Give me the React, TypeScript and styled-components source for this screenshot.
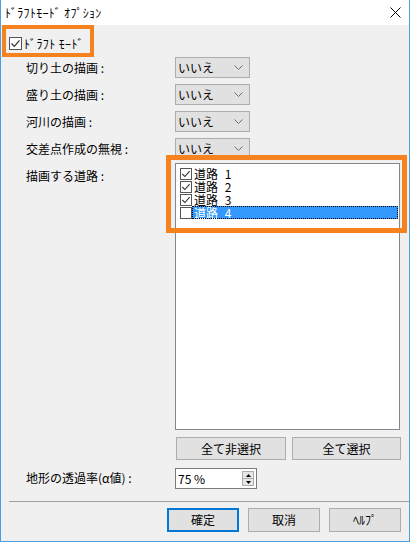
import React from "react";
import styled, { createGlobalStyle } from "styled-components";

const Global = createGlobalStyle`
  html, body { margin: 0; padding: 0; background: #ffffff; }
  body { font-family: "Noto Sans CJK JP", "Noto Sans", sans-serif; font-size: 12px; color: #000; }
  * { box-sizing: border-box; }
`;

const ORANGE = "#f5821f";

const Window = styled.div`
  width: 410px;
  height: 542px;
  border: 1px solid #4a9fe0;
  border-top: none;
  display: flex;
  flex-direction: column;
  background: #f0f0f0;
  overflow: hidden;
`;

const TitleBar = styled.div`
  height: 25px;
  background: #ffffff;
  display: flex;
  align-items: center;
  justify-content: space-between;
  padding: 0 8px 0 4px;
  flex: none;
`;

const Title = styled.span`
  font-size: 12px;
  line-height: 14px;
  letter-spacing: 0.3px;
`;

const Body = styled.div`
  flex: 1;
  display: flex;
  flex-direction: column;
  background: #f0f0f0;
`;

const DraftBox = styled.div`
  margin-left: 1px;
  width: 92px;
  height: 32px;
  border: 4px solid ${ORANGE};
  display: flex;
  align-items: center;
  padding: 5px 0 0 3px;
  gap: 2px;
`;

const BoxLabel = styled.span`
  font-size: 12px;
  line-height: 13px;
  letter-spacing: 0.4px;
`;

const CheckBox = styled.span<{ $size: number }>`
  width: ${(p) => p.$size}px;
  height: ${(p) => p.$size}px;
  flex: none;
  background: #ffffff;
  border: 1px solid #555555;
  display: inline-flex;
  align-items: center;
  justify-content: center;
`;

const Form = styled.div`
  display: grid;
  grid-template-columns: 149px 225px;
  row-gap: 6px;
  padding-left: 25px;
  align-items: center;
`;

const Label = styled.div<{ $top?: boolean }>`
  font-size: 12px;
  line-height: 14px;
  align-self: ${(p) => (p.$top ? "start" : "center")};
  padding-top: ${(p) => (p.$top ? "4px" : "0")};
`;

const Select = styled.div`
  width: 75px;
  height: 21px;
  background: #e1e1e1;
  border: 1px solid #adadad;
  display: flex;
  align-items: center;
  justify-content: space-between;
  padding: 0 6px 0 2px;
  font-size: 12px;
  line-height: 14px;
`;

const ListWrap = styled.div`
  position: relative;
  margin-top: -2px;
`;

const List = styled.div`
  height: 267px;
  background: #ffffff;
  border: 1px solid #828790;
  padding: 3px 0 0 4px;
  display: flex;
  flex-direction: column;
`;

const Item = styled.div`
  height: 13px;
  display: flex;
  align-items: center;
`;

const ItemText = styled.span<{ $selected?: boolean }>`
  flex: 1;
  height: 13px;
  margin-right: 1px;
  padding-left: 2px;
  font-size: 12px;
  line-height: 13px;
  word-spacing: 4px;
  color: ${(p) => (p.$selected ? "#ffffff" : "#000000")};
  background: ${(p) => (p.$selected ? "#3399ff" : "transparent")};
  outline: ${(p) => (p.$selected ? "1px dotted #000" : "none")};
  outline-offset: -1px;
`;

const Highlight = styled.div`
  position: absolute;
  left: -9px;
  top: -8px;
  width: 241px;
  height: 78px;
  border: 5px solid ${ORANGE};
  pointer-events: none;
`;

const ButtonRow = styled.div`
  display: grid;
  grid-template-columns: 110px 109px;
  column-gap: 6px;
  padding-left: 1px;
  margin-top: 1px;
`;

const Button = styled.button<{ $default?: boolean }>`
  height: 23px;
  background: #e1e1e1;
  border: ${(p) => (p.$default ? "2px solid #0078d7" : "1px solid #adadad")};
  font-family: "Noto Sans CJK JP", "Noto Sans", sans-serif;
  font-size: 12px;
  line-height: 14px;
  color: #000;
  padding: 0;
  display: flex;
  align-items: center;
  justify-content: center;
`;

const FooterButton = styled(Button)`
  width: 72px;
  height: 24px;
`;

const Spin = styled.div`
  width: 82px;
  height: 21px;
  background: #ffffff;
  border: 1px solid #7a7a7a;
  display: flex;
  align-items: center;
  justify-content: space-between;
  padding: 0 2px 0 2px;
  font-size: 12px;
  line-height: 14px;
  margin-top: 2px;
`;

const SpinButtons = styled.div`
  width: 12px;
  height: 15px;
  display: flex;
  flex-direction: column;
  border: 1px solid #adadad;
  background: #e6e6e6;
`;

const SpinPart = styled.div<{ $top?: boolean }>`
  flex: 1;
  display: flex;
  align-items: center;
  justify-content: center;
  border-bottom: ${(p) => (p.$top ? "1px solid #adadad" : "none")};
`;

const Separator = styled.div`
  height: 1px;
  background: #a0a0a0;
  margin: 12px 0 0 8px;
`;

const Footer = styled.div`
  display: flex;
  justify-content: flex-end;
  gap: 9px;
  padding: 6px 8px 0 0;
`;

const Check = ({ checked, size = 13 }: { checked: boolean; size?: number }) => (
  <CheckBox $size={size}>
    {checked && (
      <svg width={size - 2} height={size - 2} viewBox="0 0 11 11">
        <path d="M1.5 5.5 L4.3 8.3 L9.5 2.3" fill="none" stroke="#333" strokeWidth="1.2" />
      </svg>
    )}
  </CheckBox>
);

const Chevron = () => (
  <svg width="9" height="5" viewBox="0 0 9 5">
    <path d="M0.5 0.5 L4.5 4.5 L8.5 0.5" fill="none" stroke="#707070" strokeWidth="1" />
  </svg>
);

const selects = ["切り土の描画 :", "盛り土の描画 :", "河川の描画 :", "交差点作成の無視 :"];
const roads = [
  { name: "道路 1", checked: true },
  { name: "道路 2", checked: true },
  { name: "道路 3", checked: true },
  { name: "道路 4", checked: false, selected: true },
];

export default function App() {
  return (
    <>
      <Global />
      <Window>
        <TitleBar>
          <Title>ﾄﾞﾗﾌﾄﾓｰﾄﾞ ｵﾌﾟｼｮﾝ</Title>
          <svg width="11" height="11" viewBox="0 0 11 11">
            <path d="M0.5 0.5 L10.5 10.5 M10.5 0.5 L0.5 10.5" stroke="#000" strokeWidth="1" />
          </svg>
        </TitleBar>
        <Body>
          <DraftBox>
            <Check checked size={13} />
            <BoxLabel>ﾄﾞﾗﾌﾄ ﾓｰﾄﾞ</BoxLabel>
          </DraftBox>
          <Form>
            {selects.map((s) => (
              <React.Fragment key={s}>
                <Label>{s}</Label>
                <Select>
                  <span>いいえ</span>
                  <Chevron />
                </Select>
              </React.Fragment>
            ))}
            <Label $top>描画する道路 :</Label>
            <ListWrap>
              <List>
                {roads.map((r) => (
                  <Item key={r.name}>
                    <Check checked={r.checked} size={12} />
                    <ItemText $selected={r.selected}>{r.name}</ItemText>
                  </Item>
                ))}
              </List>
              <Highlight />
            </ListWrap>
            <div />
            <ButtonRow>
              <Button>全て非選択</Button>
              <Button>全て選択</Button>
            </ButtonRow>
            <Label>地形の透過率(α値) :</Label>
            <Spin>
              <span>75 %</span>
              <SpinButtons>
                <SpinPart $top>
                  <svg width="5" height="3" viewBox="0 0 5 3">
                    <path d="M0 3 L2.5 0 L5 3 Z" fill="#000" />
                  </svg>
                </SpinPart>
                <SpinPart>
                  <svg width="5" height="3" viewBox="0 0 5 3">
                    <path d="M0 0 L2.5 3 L5 0 Z" fill="#000" />
                  </svg>
                </SpinPart>
              </SpinButtons>
            </Spin>
          </Form>
          <Separator />
          <Footer>
            <FooterButton $default>確定</FooterButton>
            <FooterButton>取消</FooterButton>
            <FooterButton>ﾍﾙﾌﾟ</FooterButton>
          </Footer>
        </Body>
      </Window>
    </>
  );
}
